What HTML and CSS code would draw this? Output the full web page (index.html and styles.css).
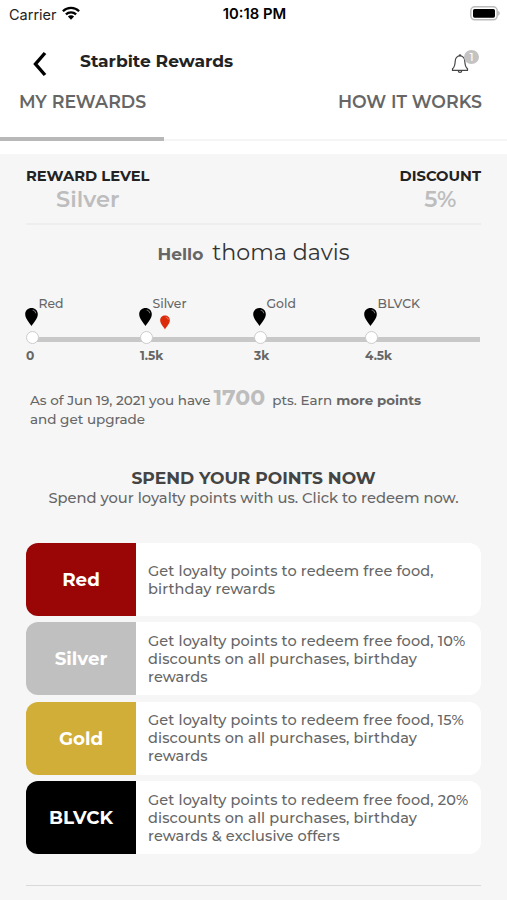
FILE: index.html
```html
<!DOCTYPE html>
<html lang="en">
<head>
<meta charset="utf-8">
<title>Starbite Rewards</title>
<link rel="stylesheet" href="styles.css">
</head>
<body>
<svg class="defs" width="0" height="0">
  <symbol id="pin" viewBox="0 0 13 18"><path d="M6.500 18C4.500 14.500.2 10.800.2 6.200.2 2.500 3 0 6.500 0s6.300 2.500 6.300 6.200C12.800 10.800 8.500 14.500 6.500 18z" fill="currentColor"/><path d="M8 2.200c1.500.2 2.500 1.200 2.700 2.700" fill="none" stroke="#fff" stroke-opacity=".6" stroke-width=".8" stroke-linecap="round"/></symbol>
</svg>
<header class="top">
  <div class="status">
    <div class="carrier"><span class="carrier-name">Carrier</span>
      <svg class="wifi" width="18" height="14" viewBox="0 0 18 14"><g fill="none" stroke="#000" stroke-width="2.300"><path d="M.9 5.200a11.500 11.500 0 0 1 16.200 0"/><path d="M3.900 8.400a7.300 7.300 0 0 1 10.200 0"/></g><path d="M9 13.700 5.900 10.600a4.400 4.400 0 0 1 6.200 0z"/></svg>
    </div>
    <time class="clock">10:18 PM</time>
    <svg class="battery" width="31" height="15" viewBox="0 0 31 15"><rect x="1.800" y=".8" width="26.400" height="13" rx="4" fill="#fff" stroke="#bbb" stroke-width="1.500"/><rect x="4" y="3" width="22" height="8.700" rx="1.600"/><path d="M29.200 5c2 .7 2 4 0 4.700z" fill="#b5b5b5"/></svg>
  </div>
  <div class="titlebar">
    <svg class="back" width="16" height="26" viewBox="0 0 16 26"><path d="M14 2 4.500 13l9.500 11" fill="none" stroke="#000" stroke-width="3.400"/></svg>
    <h1 class="title">Starbite Rewards</h1>
    <div class="bell">
      <svg width="18" height="20" viewBox="0 0 18 20"><path d="M9 2C6 2 4.400 4.300 4.200 7.200 4 11 3.600 13.300 1.500 14.800v1.500h15v-1.500c-2.100-1.500-2.500-3.800-2.700-7.600C13.600 4.300 12 2 9 2zM7.200 16.500c.1 2.600 3.500 2.600 3.600 0M8 2c0-1.500 2-1.500 2 0" fill="none" stroke="#444" stroke-width="1.200"/></svg>
      <span class="badge">1</span>
    </div>
  </div>
  <nav class="tabs"><span>MY REWARDS</span><span>HOW IT WORKS</span></nav>
  <div class="track"><div class="thumb"></div></div>
</header>
<main class="main">
  <section class="summary">
    <div><div class="label">REWARD LEVEL</div><div class="value">Silver</div></div>
    <div><div class="label">DISCOUNT</div><div class="value">5%</div></div>
  </section>
  <p class="greet"><b class="hello">Hello</b><span class="name">thoma davis</span></p>
  <section class="levels">
    <div class="level-item"><span class="level-name">Red</span><svg class="pin"><use href="#pin"/></svg><i class="dot"></i><b class="pts">0</b></div>
    <div class="level-item"><span class="level-name">Silver</span><svg class="pin"><use href="#pin"/></svg><svg class="pin you"><use href="#pin"/></svg><i class="dot"></i><b class="pts">1.5k</b></div>
    <div class="level-item"><span class="level-name">Gold</span><svg class="pin"><use href="#pin"/></svg><i class="dot"></i><b class="pts">3k</b></div>
    <div class="level-item"><span class="level-name">BLVCK</span><svg class="pin"><use href="#pin"/></svg><i class="dot"></i><b class="pts">4.5k</b></div>
  </section>
  <div class="balance">
    <div class="balance-row"><span class="asof">As of Jun 19, 2021 you have</span><b class="amount">1700</b><span class="earn">pts. Earn</span><b class="more">more points</b></div>
    <div class="upgrade">and get upgrade</div>
  </div>
  <h2 class="spend">SPEND YOUR POINTS NOW</h2>
  <p class="sub">Spend your loyalty points with us. Click to redeem now.</p>
  <section class="cards">
    <article class="card"><h3 class="tier red">Red</h3><p class="desc">Get loyalty points to redeem free food,<br>birthday rewards</p></article>
    <article class="card"><h3 class="tier silver">Silver</h3><p class="desc">Get loyalty points to redeem free food, 10%<br>discounts on all purchases, birthday<br>rewards</p></article>
    <article class="card"><h3 class="tier gold">Gold</h3><p class="desc">Get loyalty points to redeem free food, 15%<br>discounts on all purchases, birthday<br>rewards</p></article>
    <article class="card"><h3 class="tier black">BLVCK</h3><p class="desc">Get loyalty points to redeem free food, 20%<br>discounts on all purchases, birthday<br>rewards &amp; exclusive offers</p></article>
  </section>
  <hr class="end">
</main>
</body>
</html>
```
FILE: styles.css
```css
* { box-sizing: border-box; margin: 0; padding: 0; }
body { width: 507px; height: 900px; overflow: hidden; background: #f6f6f6; color: #666; font-family: Montserrat, Inter, sans-serif; font-weight: 500; white-space: nowrap; }
svg { display: block; flex: none; }
.defs { position: absolute; }
.top { height: 154px; background: #fff; }
.status { height: 28px; padding: 0 7px 0 9px; display: grid; grid-template-columns: 1fr auto 1fr; align-items: center; color: #000; font-family: Inter, sans-serif; }
.carrier { display: flex; align-items: center; gap: 6px; }
.carrier-name { font-size: 14.500px; font-weight: 400; color: #222; }
.wifi { margin: -2px 0 0 -1px; }
.clock { font-size: 14.800px; font-weight: 600; }
.battery { justify-self: end; margin-top: -1px; }
.titlebar { height: 60px; padding: 0 26px 0 31px; display: flex; align-items: flex-start; }
.back { margin-top: 23px; }
.title { margin: 22px 0 0 33px; font-size: 17.100px; line-height: 21px; font-weight: 700; color: #222; }
.bell { position: relative; width: 30px; height: 26px; margin: 26px 0 0 auto; }
.badge { position: absolute; left: 13px; top: -4px; width: 15px; height: 14px; border-radius: 50%; background: #c3c3c3; color: #fff; font-size: 11px; line-height: 14px; text-align: center; }
.tabs { height: 49px; padding: 4px 25px 0 19px; display: flex; justify-content: space-between; font-size: 17.400px; line-height: 20px; font-weight: 600; }
.track { height: 4px; border-bottom: 2px solid #f5f5f5; }
.thumb { width: 164px; height: 4px; background: #b8b8b8; }
.main { padding: 0 26px; }
.summary { height: 71px; padding-top: 12px; display: flex; justify-content: space-between; border-bottom: 2px solid #eee; text-align: center; }
.label { font-size: 14.700px; line-height: 20px; font-weight: 700; color: #222; }
.value { font-size: 22.500px; line-height: 26px; font-weight: 600; color: #bdbdbd; }
.greet { height: 54px; padding-top: 14px; display: flex; justify-content: center; align-items: baseline; line-height: 28px; }
.hello { margin-right: 9px; font-size: 17px; }
.name { font-size: 22.200px; font-weight: 400; color: #333; }
.levels { height: 92px; margin-top: 14px; display: grid; grid-template-columns: 114px 114px 111px 115px; background: linear-gradient(#c8c8c8, #c8c8c8) 6px 44px / 448px 5px no-repeat; }
.level-item { position: relative; display: grid; grid-template-rows: 15px 18px 5px 13px 22px; justify-items: start; }
.level-name { margin-left: 12.500px; font-size: 12.400px; line-height: 21px; }
.pin { width: 13px; height: 18px; margin-left: -1px; color: #000; }
.you { position: absolute; left: 20px; top: 22px; width: 10px; height: 15px; margin: 0; color: #dc2b0b; }
.dot { grid-row: 4; width: 13px; height: 13px; border: 1px solid #ccc; border-radius: 50%; background: #fff; }
.pts { grid-row: 5; font-size: 12.200px; line-height: 24px; }
.balance { height: 82px; padding-left: 4px; font-size: 13.500px; }
.balance-row { height: 26px; display: flex; align-items: baseline; line-height: 25px; }
.amount { margin: 0 7px 0 3px; font-size: 22px; color: #bdbdbd; }
.earn { margin-right: 4px; }
.more { font-size: 13.400px; font-weight: 700; }
.upgrade { line-height: 16px; }
.spend { font-size: 17.100px; line-height: 22px; text-align: center; color: #444; }
.sub { font-size: 14.700px; line-height: 18px; text-align: center; }
.cards { margin-top: 36px; display: grid; grid-auto-rows: 73px; row-gap: 6.400px; }
.card { display: grid; grid-template-columns: 110px 1fr; border-radius: 12px; overflow: hidden; background: #fff; }
.tier { display: flex; justify-content: center; align-items: center; font-size: 18.300px; color: #fff; }
.red { background: #9a0505; }
.silver { background: #c0c0c0; }
.gold { background: #d1ae37; }
.black { background: #000; }
.desc { align-self: center; padding-left: 12px; font-size: 14.500px; line-height: 18px; letter-spacing: .13px; }
.end { margin-top: 30.500px; border: 0; border-top: 1px solid #d9d9d9; }
```
